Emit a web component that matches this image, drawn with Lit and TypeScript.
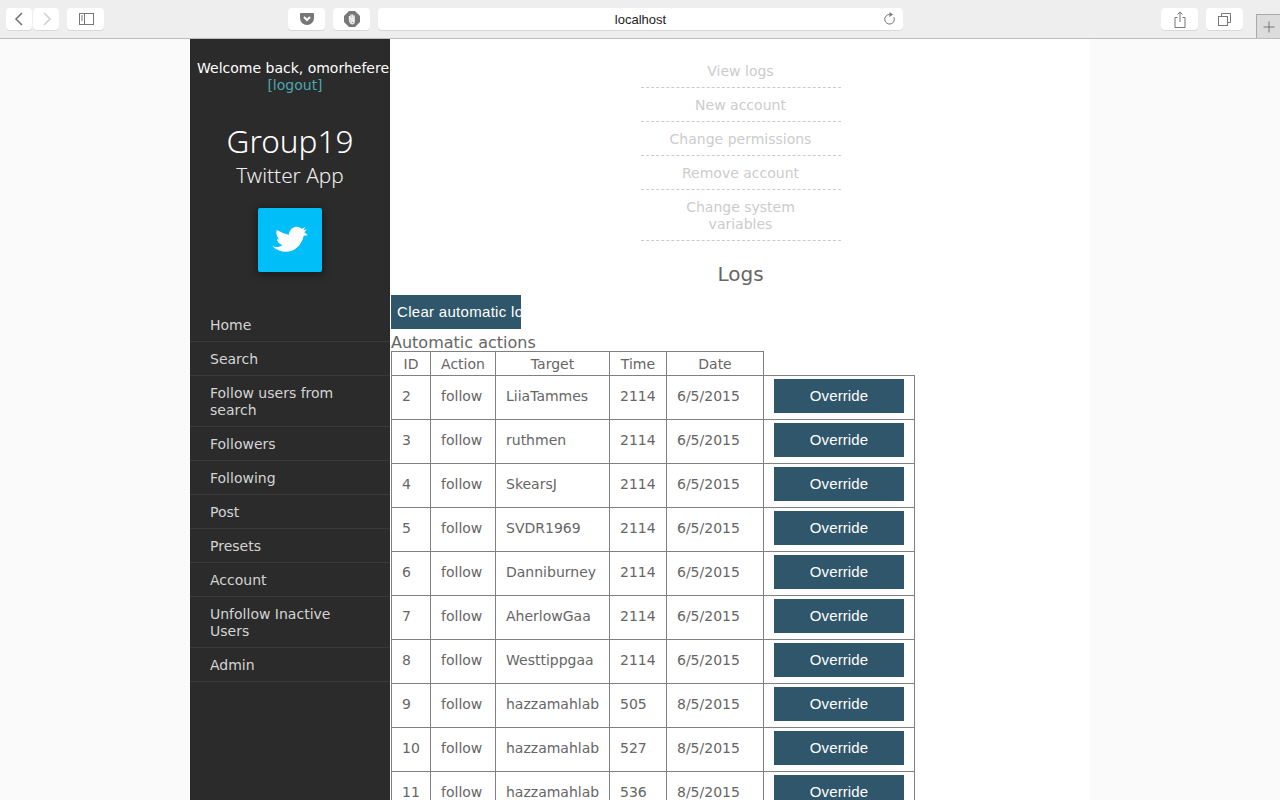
import { LitElement, html, css, svg } from 'lit';
import { customElement } from 'lit/decorators.js';

const NAV = ['Home', 'Search', 'Follow users from search', 'Followers', 'Following', 'Post', 'Presets', 'Account', 'Unfollow Inactive Users', 'Admin'];
const SUBNAV = ['View logs', 'New account', 'Change permissions', 'Remove account', 'Change system variables'];
const ROWS = [
  ['2', 'LiiaTammes', '2114', '6/5/2015'],
  ['3', 'ruthmen', '2114', '6/5/2015'],
  ['4', 'SkearsJ', '2114', '6/5/2015'],
  ['5', 'SVDR1969', '2114', '6/5/2015'],
  ['6', 'Danniburney', '2114', '6/5/2015'],
  ['7', 'AherlowGaa', '2114', '6/5/2015'],
  ['8', 'Westtippgaa', '2114', '6/5/2015'],
  ['9', 'hazzamahlab', '505', '8/5/2015'],
  ['10', 'hazzamahlab', '527', '8/5/2015'],
  ['11', 'hazzamahlab', '536', '8/5/2015'],
];

const icon = (w: number, h: number, body: unknown) => html`<svg width=${w} height=${h} viewBox="0 0 ${w} ${h}" fill="none" stroke="#777" stroke-width="1">${body}</svg>`;

@customElement('app-root')
export class AppRoot extends LitElement {
  static override styles = css`
    :host {
      display: block;
      height: 800px;
      overflow: hidden;
      background: #fafafa;
      font-family: 'DejaVu Sans', Verdana, sans-serif;
      font-size: 14px;
      line-height: 17px;
      color: #666;
    }

    /* browser toolbar */
    .toolbar {
      height: 39px;
      box-sizing: border-box;
      padding: 8px 0 0 6px;
      display: flex;
      align-items: flex-start;
      background: #eeeeee;
      border-bottom: 1px solid #bdbdbd;
      position: relative;
    }
    .tb {
      height: 22px;
      width: 37px;
      flex: none;
      display: flex;
      align-items: center;
      justify-content: center;
      background: #fff;
      border-radius: 4px;
      box-shadow: 0 1px 0 #d8d8d8;
    }
    .tb.nav { width: 26px; margin-right: 1px; }
    .tb.gap { margin-left: 8px; }
    .tb.side { margin-left: 7px; margin-right: 184px; }
    .url {
      width: 525px;
      height: 22px;
      flex: none;
      margin: 0 258px 0 8px;
      position: relative;
      display: flex;
      align-items: center;
      justify-content: center;
      padding-top: 1px;
      box-sizing: border-box;
      background: #fff;
      border-radius: 4px;
      box-shadow: 0 1px 0 #d8d8d8;
      font-family: 'Liberation Sans', Arial, sans-serif;
      font-size: 13px;
      color: #222;
    }
    .reload { position: absolute; right: 6px; top: 4px; }
    .newtab {
      position: absolute;
      right: 0;
      top: 14px;
      width: 24px;
      height: 24px;
      box-sizing: border-box;
      display: flex;
      align-items: center;
      justify-content: center;
      background: #dcdcdc;
      border: 1px solid #a9a9a9;
      border-width: 1px 0 0 1px;
    }

    /* page */
    .page {
      width: 900px;
      margin: 0 auto;
      height: 761px;
      display: flex;
      background: #fff;
    }

    .sidebar {
      width: 200px;
      flex: none;
      background: #2b2b2b;
      color: #fff;
      text-align: center;
      box-sizing: border-box;
      padding-top: 21px;
    }
    .welcome { white-space: nowrap; padding-left: 7px; text-align: left; color: #fff; }
    .logout { color: #4ba6b3; padding-left: 10px; }
    .title {
      margin-top: 26px;
      font-family: 'Noto Sans', 'Open Sans', sans-serif;
      font-size: 31.5px;
      line-height: 42px;
      font-weight: 300;
      color: #fff;
    }
    .subtitle {
      font-family: 'Noto Sans', 'Open Sans', sans-serif;
      font-size: 20.8px;
      line-height: 26px;
      font-weight: 300;
      color: #eee;
    }
    .tile {
      width: 64px;
      height: 64px;
      margin: 20px auto 36px;
      display: flex;
      align-items: center;
      justify-content: center;
      background: #00bff8;
      border-radius: 2px;
      box-shadow: 0 2px 10px rgba(0, 0, 0, 0.5);
    }
    .menu { list-style: none; margin: 0; padding: 0; text-align: left; }
    .menu li {
      padding: 9px 40px 7px 20px;
      border-bottom: 1px solid #3a3a3a;
      color: #d4d4d4;
    }

    .content { flex: 1; min-width: 0; padding-top: 15px; padding-left: 1px; }
    .subnav { list-style: none; width: 200px; margin: 0 auto; padding: 0; text-align: center; }
    .subnav li {
      padding: 9px 28px 7px;
      border-bottom: 1px dashed #ccc;
      color: #ccc;
    }
    h2 {
      margin: 20px 0 8px;
      font-size: 20px;
      line-height: 26px;
      font-weight: 400;
      text-align: center;
      color: #666;
    }
    .action {
      display: block;
      border: 0;
      padding: 0 6px;
      background: #2f566a;
      color: #fff;
      font-family: 'Liberation Sans', Arial, sans-serif;
      font-size: 15px;
      white-space: nowrap;
      overflow: hidden;
      text-align: left;
    }
    .clear { width: 130px; height: 34px; letter-spacing: 0.3px; padding-bottom: 1px; }
    .caption { font-size: 16px; line-height: 17px; margin-top: 5px; color: #666; }

    table {
      border-collapse: collapse;
      table-layout: fixed;
      width: 524px;
    }
    th, td {
      border: 1px solid #808080;
      font-weight: 400;
      white-space: nowrap;
      box-sizing: border-box;
    }
    th { height: 24px; text-align: center; padding: 1px 0 0; }
    td { height: 44px; text-align: left; padding: 0 10px 2px; }
    th.blank { border: 0; }
    td.btn-cell { padding: 3px 10px 0; vertical-align: top; }
    .override { width: 130px; height: 34px; text-align: center; letter-spacing: 0.1px; padding-bottom: 1px; }
  `;

  private renderToolbar() {
    return html`
      <div class="toolbar">
        <div class="tb nav">${icon(26, 22, svg`<path d="M16 5l-6 6 6 6" stroke-width="1.6"/>`)}</div>
        <div class="tb nav">${icon(26, 22, svg`<path d="M11 5l6 6-6 6" stroke="#d0d0d0" stroke-width="1.6"/>`)}</div>
        <div class="tb side">${icon(16, 12, svg`<rect x="1.5" y=".5" width="14" height="11"/><path d="M6.5 .5v11M3 3h2M3 5h2M3 7h2"/>`)}</div>
        <div class="tb">${icon(16, 14, svg`<path d="M2 1h12a1 1 0 011 1v4a7 7 0 01-14 0V2a1 1 0 011-1z" fill="#777" stroke="none"/><path d="M5 5l3 3 3-3" stroke="#fff" stroke-width="2"/>`)}</div>
        <div class="tb gap">${icon(16, 16, svg`<path d="M5 0h6l5 5v6l-5 5H5l-5-5V5z" fill="#777" stroke="none"/><path d="M5.500 5v4M7 3.500v5M8.600 3.500v5M10.200 4.500v5M5.500 9c.6 2.800 1.600 3.800 3 3.800 1.600 0 1.700-1.600 1.700-3.300" stroke="#eee" stroke-width="1.400"/><path d="M6 7h4v4H7z" fill="#eee" stroke="none"/>`)}</div>
        <div class="url">
          localhost
          <svg class="reload" width="14" height="14" viewBox="0 0 14 14" fill="none" stroke="#777" stroke-width="1">
            <path d="M6.500 2.500a4.800 4.800 0 104.300 2.600"/><path d="M6.500 0l3.500 2.500-3.500 2.500z" fill="#777" stroke="none"/>
          </svg>
        </div>
        <div class="tb">${icon(12, 17, svg`<path d="M3.500 6.500H1v10h10v-10H8.500M6 11V1M3.500 3.500L6 1l2.500 2.500"/>`)}</div>
        <div class="tb gap">${icon(13, 13, svg`<rect x=".5" y="3.500" width="9" height="9"/><path d="M3.500 3.500v-3h9v9h-3"/>`)}</div>
        <div class="newtab">${icon(12, 12, svg`<path d="M6 .5v11M.5 6h11"/>`)}</div>
      </div>
    `;
  }

  private renderSidebar() {
    return html`
      <aside class="sidebar">
        <div class="welcome">Welcome back, omorhefere.</div>
        <div class="logout">[logout]</div>
        <div class="title">Group19</div>
        <div class="subtitle">Twitter App</div>
        <div class="tile">
          <svg width="50" height="40" viewBox="0 0 150 120">
            <path fill="#fff" d="M35 30 C48 37 60 42 72 44 C72 32 82 20 95 20 C102 20 107 23 110 26 L121 21 L115 31 L126 28 L118 37 C120 39 127 44 128 46 L116 47 C113 64 100 86 78 93 C60 99 38 94 22 79 C33 83 45 82 52 75 C42 72 36 65 36 57 L42 59 C36 50 32 40 35 30 Z"/>
          </svg>
        </div>
        <ul class="menu">${NAV.map((n) => html`<li>${n}</li>`)}</ul>
      </aside>
    `;
  }

  override render() {
    return html`
      ${this.renderToolbar()}
      <div class="page">
        ${this.renderSidebar()}
        <main class="content">
          <ul class="subnav">${SUBNAV.map((s) => html`<li>${s}</li>`)}</ul>
          <h2>Logs</h2>
          <button class="action clear">Clear automatic logs</button>
          <div class="caption">Automatic actions</div>
          <table>
            <colgroup>
              <col style="width: 39px" /><col style="width: 65px" /><col style="width: 114px" />
              <col style="width: 57px" /><col style="width: 97px" /><col style="width: 151px" />
            </colgroup>
            <thead>
              <tr><th>ID</th><th>Action</th><th>Target</th><th>Time</th><th>Date</th><th class="blank"></th></tr>
            </thead>
            <tbody>
              ${ROWS.map(([id, target, time, date]) => html`
                <tr>
                  <td>${id}</td>
                  <td>follow</td>
                  <td>${target}</td>
                  <td>${time}</td>
                  <td>${date}</td>
                  <td class="btn-cell"><button class="action override">Override</button></td>
                </tr>
              `)}
            </tbody>
          </table>
        </main>
      </div>
    `;
  }
}
